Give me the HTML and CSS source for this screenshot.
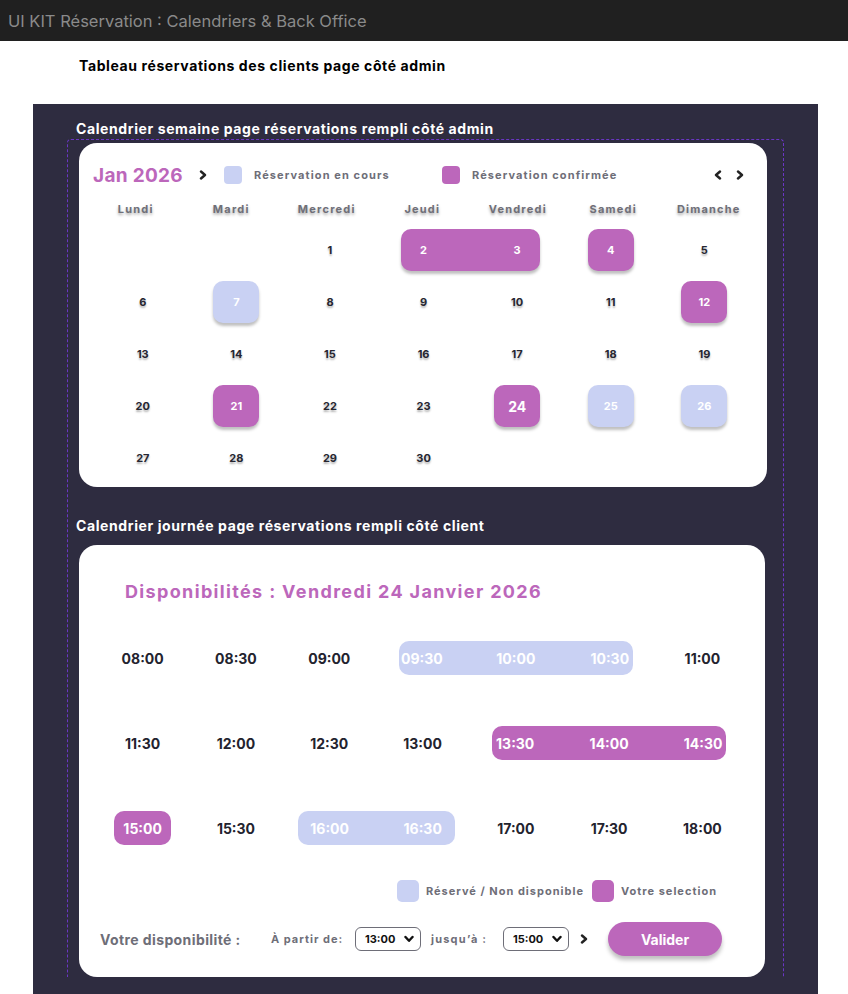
FILE: index.html
```html
<!DOCTYPE html>
<html lang="fr">
<head>
<meta charset="utf-8">
<title>UI KIT Réservation</title>
<link rel="stylesheet" href="styles.css">
</head>
<body>
<div class="topbar"><span>UI KIT Réservation : Calendriers &amp; Back Office</span></div>
<h1 class="page-title">Tableau réservations des clients page côté admin</h1>
<div class="panel">
  <h2 class="section-label">Calendrier semaine page réservations rempli côté admin</h2>
  <div class="frame">
    <section class="card month-card">
      <div class="month-head">
        <span class="month">Jan 2026</span>
        <svg class="chev" viewBox="0 0 8 10" width="8" height="10"><polyline points="2,1.5 6,5 2,8.5" fill="none" stroke="#222" stroke-width="2.4" stroke-linecap="round" stroke-linejoin="round"/></svg>
        <div class="legend-item first"><span class="sq blue"></span><span>Réservation en cours</span></div>
        <div class="legend-item"><span class="sq purple"></span><span>Réservation confirmée</span></div>
        <div class="nav">
          <svg viewBox="0 0 8 10" width="8" height="10"><polyline points="6,1.5 2,5 6,8.5" fill="none" stroke="#222" stroke-width="2.4" stroke-linecap="round" stroke-linejoin="round"/></svg>
          <svg viewBox="0 0 8 10" width="8" height="10"><polyline points="2,1.5 6,5 2,8.5" fill="none" stroke="#222" stroke-width="2.4" stroke-linecap="round" stroke-linejoin="round"/></svg>
        </div>
      </div>
      <div class="weekdays">
        <span>Lundi</span><span>Mardi</span><span>Mercredi</span><span>Jeudi</span><span>Vendredi</span><span>Samedi</span><span>Dimanche</span>
      </div>
      <div class="dates">
        <span class="d start3">1</span>
        <span class="d span2 purple"><span>2</span><span>3</span></span>
        <span class="d box purple">4</span>
        <span class="d">5</span>
        <span class="d">6</span>
        <span class="d box blue">7</span>
        <span class="d">8</span>
        <span class="d">9</span>
        <span class="d">10</span>
        <span class="d">11</span>
        <span class="d box purple">12</span>
        <span class="d">13</span>
        <span class="d">14</span>
        <span class="d">15</span>
        <span class="d">16</span>
        <span class="d">17</span>
        <span class="d">18</span>
        <span class="d">19</span>
        <span class="d">20</span>
        <span class="d box purple">21</span>
        <span class="d">22</span>
        <span class="d">23</span>
        <span class="d box purple big">24</span>
        <span class="d box blue">25</span>
        <span class="d box blue">26</span>
        <span class="d">27</span>
        <span class="d">28</span>
        <span class="d">29</span>
        <span class="d">30</span>
      </div>
    </section>
    <h2 class="section-label second">Calendrier journée page réservations rempli côté client</h2>
    <section class="card day-card">
      <h3 class="day-title">Disponibilités : Vendredi 24 Janvier 2026</h3>
      <div class="times">
        <span class="t">08:00</span>
        <span class="t">08:30</span>
        <span class="t">09:00</span>
        <span class="bar blue span3"><span>09:30</span><span>10:00</span><span>10:30</span></span>
        <span class="t">11:00</span>

        <span class="t">11:30</span>
        <span class="t">12:00</span>
        <span class="t">12:30</span>
        <span class="t">13:00</span>
        <span class="bar purple span3"><span>13:30</span><span>14:00</span><span>14:30</span></span>

        <span class="t sel purple">15:00</span>
        <span class="t">15:30</span>
        <span class="bar blue span2"><span>16:00</span><span>16:30</span></span>
        <span class="t">17:00</span>
        <span class="t">17:30</span>
        <span class="t">18:00</span>
      </div>
      <div class="day-legend">
        <span class="sq lg blue"></span><span class="lg-text">Réservé / Non disponible</span>
        <span class="sq lg purple"></span><span class="lg-text">Votre selection</span>
      </div>
      <div class="avail">
        <span class="avail-label">Votre disponibilité :</span>
        <span class="small-label from">À partir de:</span>
        <span class="select">13:00 <svg viewBox="0 0 10 8" width="10" height="8"><polyline points="1.5,2 5,5.8 8.5,2" fill="none" stroke="#111" stroke-width="2.4" stroke-linecap="round" stroke-linejoin="round"/></svg></span>
        <span class="small-label to">jusqu’à :</span>
        <span class="select">15:00 <svg viewBox="0 0 10 8" width="10" height="8"><polyline points="1.5,2 5,5.8 8.5,2" fill="none" stroke="#111" stroke-width="2.4" stroke-linecap="round" stroke-linejoin="round"/></svg></span>
        <svg class="go" viewBox="0 0 8 10" width="8" height="10"><polyline points="2,1.5 6,5 2,8.5" fill="none" stroke="#222" stroke-width="2.4" stroke-linecap="round" stroke-linejoin="round"/></svg>
        <button class="btn">Valider</button>
      </div>
    </section>
  </div>
</div>
</body>
</html>
```

FILE: styles.css
```css
* { box-sizing: border-box; }
html, body { margin: 0; padding: 0; }
body {
  background: #ffffff;
  font-family: Inter, "DejaVu Sans", sans-serif;
  color: #23232e;
  width: 848px;
  overflow: hidden;
}

.topbar {
  height: 41px;
  background: #202020;
  display: flex;
  align-items: center;
  padding-left: 8px;
  color: #8a8a8a;
  font-size: 16.5px;
  font-weight: 400;
}

.page-title {
  margin: 0;
  padding: 16px 0 0 79px;
  font-size: 14px;
  line-height: 18px;
  font-weight: 700;
  color: #000;
  letter-spacing: 0.6px;
}

.panel {
  margin: 29px 0 0 33px;
  width: 785px;
  background: #2e2c40;
  padding: 16px 0 17px 0;
}

.section-label {
  margin: 0 0 1px 43px;
  color: #fff;
  font-size: 14px;
  line-height: 18px;
  font-weight: 700;
  letter-spacing: 0.6px;
}

.section-label.second {
  margin: 30px 0 10px -3px;
}

.frame {
  margin-left: 34px;
  width: 717px;
  border: 1px dashed #6a36c4;
  border-bottom: none;
  border-radius: 4px 4px 0 0;
  padding: 3px 0 0 11px;
}

.card {
  background: #fff;
  border-radius: 18px;
}

/* ---------- month calendar ---------- */
.month-card {
  width: 688px;
  height: 344px;
  padding: 20px 0 3px 0;
}

.month-head {
  height: 24px;
  display: flex;
  align-items: center;
  padding-left: 14px;
  padding-right: 23px;
}

.month {
  width: 106px;
  color: #bc67bb;
  font-size: 19px;
  font-weight: 700;
  letter-spacing: 0.3px;
}

.chev { margin-right: 17px; }

.legend-item {
  display: flex;
  align-items: center;
  gap: 12px;
  width: 218px;
  color: #6e6e78;
  font-size: 11px;
  font-weight: 700;
  letter-spacing: 1.1px;
}

.sq {
  display: inline-block;
  width: 18px;
  height: 18px;
  border-radius: 4px;
}
.sq.blue, .blue { background: #c9d1f3; }
.sq.purple, .purple { background: #bc67bb; }

.nav {
  margin-left: auto;
  display: flex;
  gap: 14px;
}

.weekdays {
  margin-top: 13px;
  height: 18px;
  display: grid;
  grid-template-columns: repeat(7, 95.5px);
  padding-left: 9px;
  align-items: center;
  justify-items: center;
  color: #6f6f78;
  font-size: 11px;
  font-weight: 700;
  letter-spacing: 1.2px;
  text-shadow: 0 2px 3px rgba(0,0,0,0.35);
}

.dates {
  margin-top: 6px;
  display: grid;
  grid-template-columns: repeat(7, 93.6px);
  grid-auto-rows: 52px;
  padding-left: 17px;
  align-items: center;
  justify-items: center;
}

.d {
  font-size: 11px;
  font-weight: 700;
  color: #262631;
  text-shadow: 0 2px 2px rgba(0,0,0,0.3);
}

.start3 { grid-column-start: 3; }

.d.box {
  width: 46px;
  height: 42px;
  border-radius: 10px;
  display: flex;
  align-items: center;
  justify-content: center;
  color: #fff;
  text-shadow: none;
  box-shadow: 0 3px 3px rgba(0,0,0,0.25);
}
.d.box.big { font-size: 14px; }

.d.span2 {
  grid-column: span 2;
  justify-self: stretch;
  margin: 0 23.8px;
  height: 42px;
  border-radius: 10px;
  display: flex;
  align-items: center;
  justify-content: space-between;
  color: #fff;
  text-shadow: none;
  box-shadow: 0 3px 3px rgba(0,0,0,0.25);
}
.d.span2 span { width: 46px; text-align: center; }

/* ---------- day calendar ---------- */
.day-card {
  width: 686px;
  height: 432px;
  padding: 36px 15px 21px 17px;
}

.day-title {
  margin: 0 0 38px 29px;
  height: 22px;
  line-height: 22px;
  color: #bc67bb;
  font-size: 18px;
  font-weight: 700;
  letter-spacing: 1.35px;
}

.times {
  display: grid;
  grid-template-columns: repeat(7, 93.3px);
  grid-auto-rows: 34px;
  row-gap: 51px;
  align-items: center;
  justify-items: center;
}

.t {
  font-size: 14px;
  font-weight: 700;
  color: #23232e;
}

.t.sel {
  width: 57px;
  height: 34px;
  border-radius: 10px;
  display: flex;
  align-items: center;
  justify-content: center;
  color: #fff;
}

.bar {
  justify-self: stretch;
  height: 34px;
  border-radius: 10px;
  display: flex;
  align-items: center;
  justify-content: space-between;
  color: #fff;
  font-size: 14px;
  font-weight: 700;
}
.bar span { width: 46px; text-align: center; }
.bar.span3 { grid-column: span 3; margin: 0 23px; }
.bar.span2 { grid-column: span 2; margin: 0 14.5px 0 15px; padding: 0 9px; }

.day-legend {
  margin-top: 35px;
  height: 22px;
  display: flex;
  align-items: center;
  justify-content: flex-end;
  padding-right: 33px;
}
.sq.lg { width: 22px; height: 22px; border-radius: 5px; }
.lg-text {
  margin-left: 7px;
  margin-right: 8px;
  color: #6e6e78;
  font-size: 11px;
  font-weight: 700;
  letter-spacing: 1px;
}
.lg-text:last-child { margin-right: 0; }

.avail {
  margin-top: 20px;
  height: 34px;
  display: flex;
  align-items: center;
  padding-left: 4px;
}

.avail-label {
  width: 171px;
  color: #6e6e78;
  font-size: 14px;
  font-weight: 700;
  letter-spacing: 0.4px;
}

.small-label {
  color: #6e6e78;
  font-size: 11px;
  font-weight: 700;
  letter-spacing: 1px;
}
.small-label.from { width: 84px; }
.small-label.to { width: 72px; margin-left: 10px; letter-spacing: 1.2px; }

.select {
  width: 66px;
  height: 24px;
  border: 1px solid #6e6e78;
  border-radius: 6px;
  display: flex;
  align-items: center;
  justify-content: space-between;
  padding: 0 6px 0 9px;
  font-size: 11px;
  font-weight: 700;
  color: #111;
}

.go { margin-left: 11px; }

.btn {
  margin-left: 20px;
  width: 114px;
  height: 34px;
  border: none;
  border-radius: 17px;
  background: #bc67bb;
  color: #fff;
  font-family: inherit;
  font-size: 14px;
  font-weight: 700;
  box-shadow: 0 4px 4px rgba(0,0,0,0.25);
}
```
